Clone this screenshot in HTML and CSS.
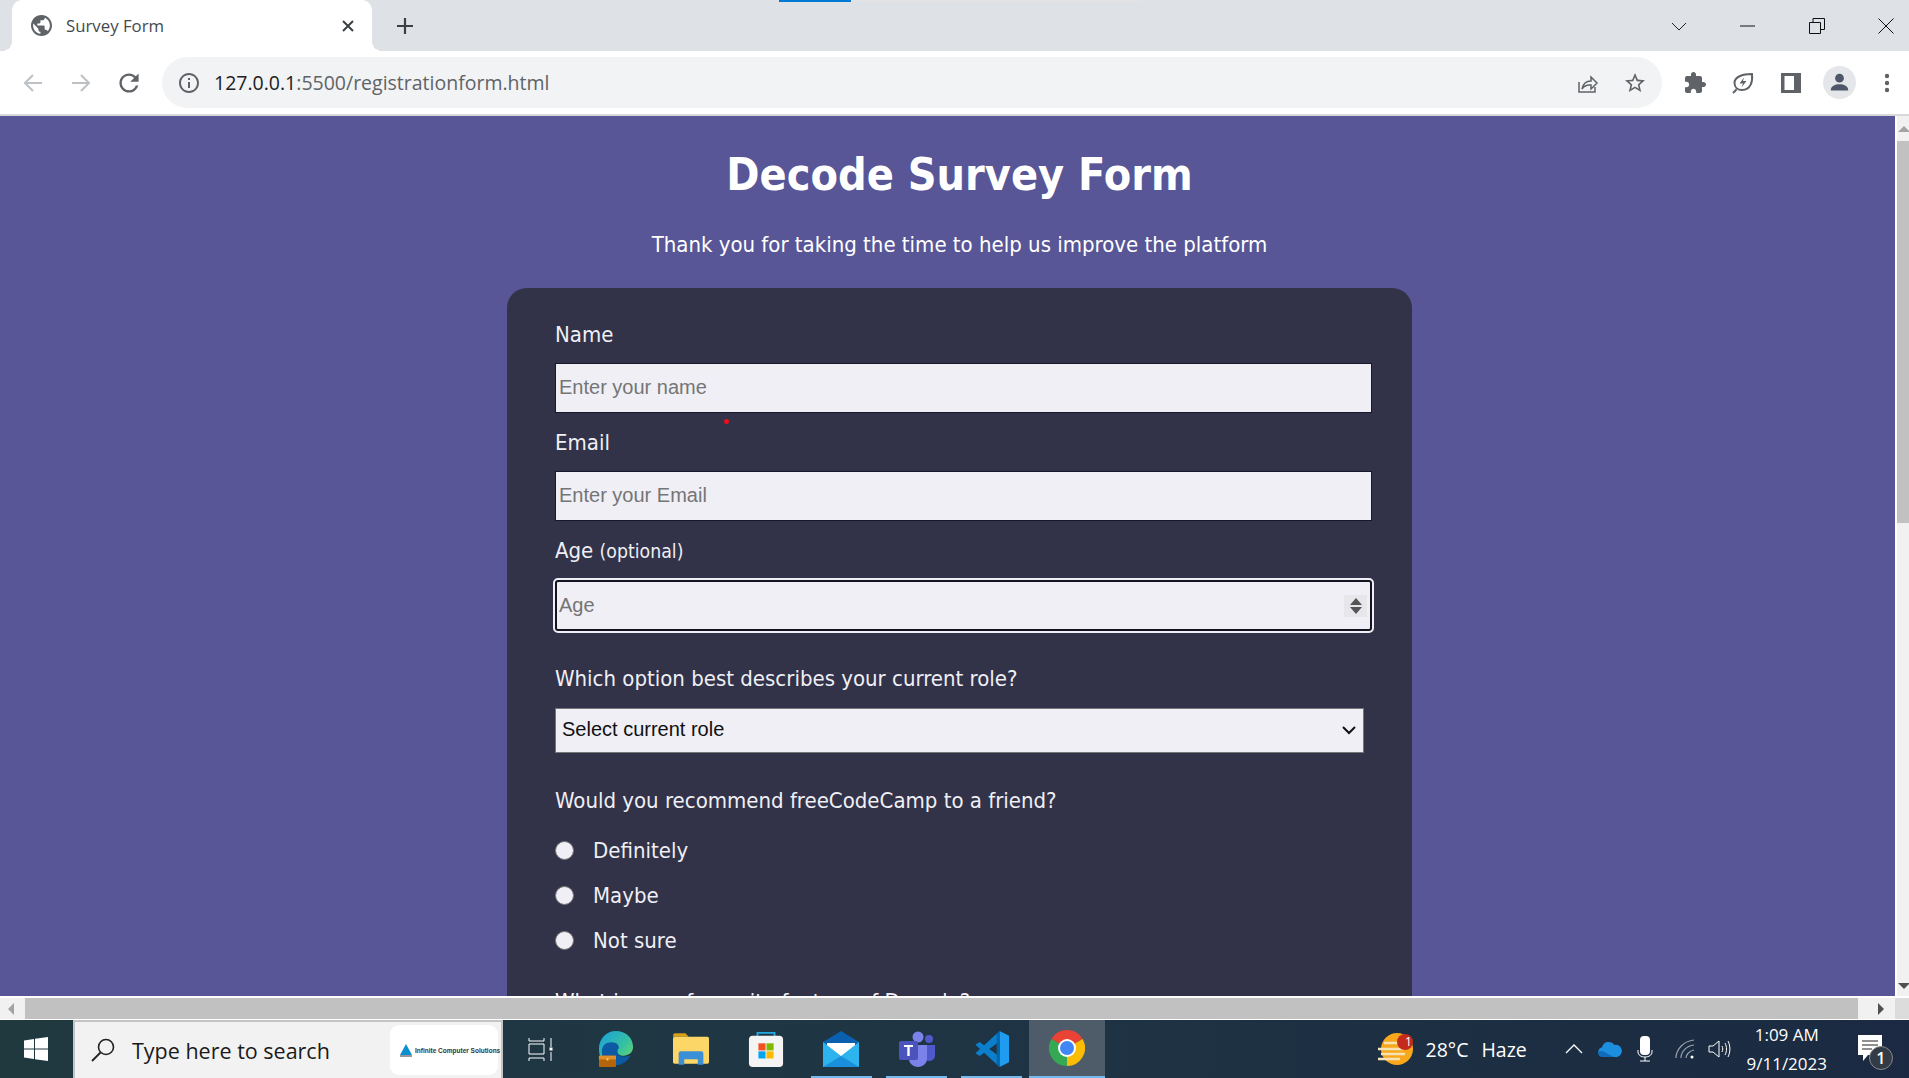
FILE: index.html
```html
<!DOCTYPE html>
<html lang="en">

<head>
    <meta charset="UTF-8">
    <meta name="viewport" content="width=device-width, initial-scale=1.0">
    <title>Survey Form</title>
    <link rel="stylesheet" href="styles.css">
</head>

<body>
    <!-- Browser tabs -->
    <div class="tabstrip">
        <div class="load-bar"><span></span></div>
        <div class="tab">
            <svg class="favicon" viewBox="2 2 20 20"><path fill="#5f6368" d="M12 2C6.48 2 2 6.48 2 12s4.48 10 10 10 10-4.48 10-10S17.52 2 12 2zm-1 17.93c-3.95-.49-7-3.85-7-7.93 0-.62.08-1.21.21-1.79L9 15v1c0 1.1.9 2 2 2v1.93zm6.9-2.54c-.26-.81-1-1.39-1.9-1.39h-1v-3c0-.55-.45-1-1-1H8v-2h2c.55 0 1-.45 1-1V7h2c1.1 0 2-.9 2-2v-.41c2.93 1.19 5 4.06 5 7.41 0 2.08-.8 3.97-2.1 5.39z"/></svg>
            <span class="tab-title">Survey Form</span>
            <svg class="tab-close" viewBox="0 0 12 12"><path d="M1 1l10 10M11 1L1 11" stroke="#3c4043" stroke-width="2" fill="none"/></svg>
        </div>
        <svg class="tab-new" viewBox="0 0 18 18"><path d="M9 1v16M1 9h16" stroke="#3c4043" stroke-width="2.2" fill="none"/></svg>
        <div class="window-btns">
            <svg viewBox="0 0 16 16"><path d="M1 5l7 7 7-7" stroke="#222" fill="none"/></svg>
            <svg viewBox="0 0 16 16"><path d="M0 8h15" stroke="#111" fill="none"/></svg>
            <svg viewBox="0 0 16 16"><path d="M.5 4.5h11v11H.5zM4 4.5V.5h11.5v11h-4" stroke="#111" fill="none"/></svg>
            <svg viewBox="0 0 16 16"><path d="M.5.5l15 15M15.5.5l-15 15" stroke="#111" fill="none"/></svg>
        </div>
    </div>

    <!-- Address bar -->
    <div class="toolbar">
        <svg class="icon" viewBox="0 0 24 24"><path d="M21 12H5M12 4l-8 8 8 8" stroke="#bdc1c6" stroke-width="2" fill="none"/></svg>
        <svg class="icon" viewBox="0 0 24 24"><path d="M3 12h16M12 4l8 8-8 8" stroke="#bdc1c6" stroke-width="2" fill="none"/></svg>
        <svg class="icon" viewBox="2 2 20 20"><path fill="#5f6368" d="M17.65 6.35C16.2 4.9 14.21 4 12 4c-4.42 0-7.99 3.58-7.99 8s3.57 8 7.99 8c3.73 0 6.84-2.55 7.73-6h-2.08c-.82 2.33-3.04 4-5.65 4-3.31 0-6-2.69-6-6s2.69-6 6-6c1.66 0 3.14.69 4.22 1.78L13 11h7V4l-2.35 2.35z"/></svg>
        <div class="omnibox">
            <svg class="icon" viewBox="0 0 24 24"><path fill="#5f6368" d="M11 7h2v2h-2zm0 4h2v6h-2zm1-9C6.48 2 2 6.48 2 12s4.48 10 10 10 10-4.48 10-10S17.52 2 12 2zm0 18c-4.41 0-8-3.59-8-8s3.59-8 8-8 8 3.59 8 8-3.59 8-8 8z"/></svg>
            <div class="url"><b>127.0.0.1</b>:5500/registrationform.html</div>
            <svg class="icon" viewBox="0 0 24 24"><path d="M4 11v10h16v-5M7 18c1-5 4-8 9-8V6l6 6-6 6v-4c-4-.5-7 1-9 4z" stroke="#5f6368" stroke-width="1.5" fill="none"/></svg>
            <svg class="icon" viewBox="0 0 24 24"><path fill="#5f6368" d="M22 9.24l-7.19-.62L12 2 9.19 8.63 2 9.24l5.46 4.73L5.82 21 12 17.27 18.18 21l-1.63-7.03L22 9.24zM12 15.4l-3.76 2.27 1-4.28-3.32-2.88 4.38-.38L12 6.1l1.71 4.04 4.38.38-3.32 2.88 1 4.28L12 15.4z"/></svg>
        </div>
        <svg class="icon" viewBox="0 0 24 24"><path fill="#5f6368" d="M20.5 11H19V7c0-1.1-.9-2-2-2h-4V3.5C13 2.12 11.88 1 10.5 1S8 2.12 8 3.5V5H4c-1.1 0-1.99.9-1.99 2v3.8H3.5c1.49 0 2.7 1.21 2.7 2.7s-1.21 2.7-2.7 2.7H2V20c0 1.1.9 2 2 2h3.8v-1.5c0-1.49 1.21-2.7 2.7-2.7 1.49 0 2.7 1.21 2.7 2.7V22H17c1.1 0 2-.9 2-2v-4h1.5c1.38 0 2.5-1.12 2.5-2.5S21.88 11 20.5 11z"/></svg>
        <svg class="icon" viewBox="0 0 24 24"><path d="M2 22l3.5-3.5M21 3c.8 7-1 16-10 16-4 0-7.5-2.5-7.5-7C3.5 6 11 3 21 3z" stroke="#5f6368" stroke-width="2" fill="none"/><path d="M13 6.5l-4.500 6h3.500l-1.500 4 5-6.500h-3.500z" fill="#5f6368"/></svg>
        <svg class="icon" viewBox="0 0 24 24"><path fill="#5f6368" fill-rule="evenodd" d="M2 2h20v20H2zM5.5 5v14H15V5z"/></svg>
        <div class="avatar">
            <svg viewBox="0 0 24 24"><circle cx="12" cy="7" r="5" fill="#4d5768"/><path d="M2 21c0-5 5-7 10-7s10 2 10 7z" fill="#4d5768"/></svg>
        </div>
        <svg class="icon" viewBox="0 0 24 24"><circle cx="12" cy="5" r="2.2" fill="#5f6368"/><circle cx="12" cy="12" r="2.2" fill="#5f6368"/><circle cx="12" cy="19" r="2.2" fill="#5f6368"/></svg>
    </div>

    <!-- Page content -->
    <div class="viewport">
        <div class="page">
            <div class="page-inner">
                <h1>Decode Survey Form</h1>
                <p class="subtitle">Thank you for taking the time to help us improve the platform</p>
                <form class="survey" action="" method="post">
                    <span class="red-dot"></span>
                    <label for="name">Name</label>
                    <input class="text-input" type="text" id="name" placeholder="Enter your name">
                    <label for="email">Email</label>
                    <input class="text-input" type="text" id="email" placeholder="Enter your Email">
                    <label for="age">Age <small>(optional)</small></label>
                    <div class="age-box">
                        <input type="text" id="age" placeholder="Age">
                        <span class="spinner"><i class="up"></i><i class="down"></i></span>
                    </div>
                    <label class="question" for="role">Which option best describes your current role?</label>
                    <select id="role">
                        <option>Select current role</option>
                    </select>
                    <label class="question q-radio">Would you recommend freeCodeCamp to a friend?</label>
                    <div class="radio-row"><input type="radio" name="rec" id="r1"><label for="r1">Definitely</label></div>
                    <div class="radio-row"><input type="radio" name="rec" id="r2"><label for="r2">Maybe</label></div>
                    <div class="radio-row"><input type="radio" name="rec" id="r3"><label for="r3">Not sure</label></div>
                    <label class="question q-next">What is your favourite feature of Decode?</label>
                </form>
            </div>
        </div>
        <div class="vscroll">
            <span class="arrow-up"></span>
            <div class="vthumb"></div>
            <span class="arrow-down"></span>
        </div>
    </div>
    <div class="hscroll">
        <span class="arrow-left"></span>
        <div class="hthumb"></div>
        <span class="arrow-right"></span>
        <div class="corner"></div>
    </div>

    <!-- Windows taskbar -->
    <div class="taskbar">
        <div class="start">
            <svg viewBox="0 0 24 24"><path fill="#fff" d="M0 3.4l10-1.400v9.500H0zM11 1.800L24 0v11.500H11zM0 12.500h10V22L0 20.600zM11 12.500h13V24l-13-1.800z"/></svg>
        </div>
        <div class="search">
            <svg viewBox="0 0 24 24"><circle cx="15" cy="9" r="7.5" stroke="#222" stroke-width="1.6" fill="none"/><path d="M9.5 14.5L1 23" stroke="#222" stroke-width="1.8" fill="none"/></svg>
            <span class="search-text">Type here to search</span>
            <div class="search-logo">
                <svg viewBox="0 0 14 14"><path d="M7 1l6 11H1z" fill="#0b8fd0"/><path d="M1 13h12" stroke="#333"/></svg>
                <span>Infinite Computer Solutions</span>
            </div>
        </div>
        <div class="app">
            <svg class="taskview" viewBox="0 0 25 25"><path d="M1 1v3h15V1M1 7h15v10H1zM1 24v-3h15v3M23 1v9M23 15v9" stroke="#fff" fill="none"/><rect x="21.5" y="10.5" width="3" height="3" fill="#fff"/></svg>
        </div>
        <div class="app">
            <svg viewBox="0 0 36 38">
                <defs><linearGradient id="edge" x1="0" y1="0" x2="1" y2="1"><stop offset="0" stop-color="#1b9de2"/><stop offset=".55" stop-color="#35c1a0"/><stop offset="1" stop-color="#7fdc5e"/></linearGradient></defs>
                <path d="M18 0c10 0 18 7 18 17 0 6-5 9-10 9-4 0-7-2-7-5 0-1 .5-2 1.5-3-3-3-11-2-13 4-2 5 0 12 6 16C6 38 0 29 0 19 0 8 8 0 18 0z" fill="url(#edge)"/>
                <path d="M3 22c0-7 5-10 10-10 6 0 8 3 8 6-1 1-1.5 2-1.5 3 0 4 3 6 7 6 3 0 6-1 7-2-3 7-9 11-16 11C9 36 3 30 3 22z" fill="#0c59a4"/>
                <rect x="0" y="26" width="18" height="12" rx="1" fill="#b3650c"/><rect x="0" y="26" width="18" height="4" fill="#e0902a"/><rect x="8" y="29" width="2" height="2" fill="#ffd36b"/>
            </svg>
        </div>
        <div class="app">
            <svg viewBox="0 0 32 28"><path d="M0 2a2 2 0 0 1 2-2h9l3 3h-14z" fill="#d99f17"/><rect x="0" y="3" width="32" height="24" rx="1.5" fill="#fcd768"/><path d="M5 28V18a2 2 0 0 1 2-2h18a2 2 0 0 1 2 2v10h-5v-5H10v5z" fill="#3b8fd6"/></svg>
        </div>
        <div class="app">
            <svg viewBox="0 0 36 38"><path d="M9 8V2h18v6" stroke="#24a9e0" stroke-width="2" fill="none"/><rect x="0" y="5" width="36" height="33" rx="4" fill="#f4f4f4"/><rect x="10" y="13" width="7.5" height="7.5" fill="#f25022"/><rect x="18.5" y="13" width="7.5" height="7.5" fill="#7fba00"/><rect x="10" y="21.5" width="7.5" height="7.5" fill="#00a4ef"/><rect x="18.5" y="21.5" width="7.5" height="7.5" fill="#ffb900"/></svg>
        </div>
        <div class="app underlined">
            <svg viewBox="0 0 36 36"><path d="M0 11L18 0l18 11v25H0z" fill="#0a5fae"/><path d="M4 12h28v8l-14 6-14-6z" fill="#fff"/><path d="M0 11l18 14 18-14v25H0z" fill="#2db4ee"/><path d="M0 36l18-11 18 11z" fill="#1a8fdc"/></svg>
        </div>
        <div class="app underlined">
            <svg viewBox="0 0 36 36"><circle cx="19" cy="6" r="5.5" fill="#7b83eb"/><circle cx="30" cy="8" r="4" fill="#5059c9"/><path d="M26 14h10v10c0 4-3 6-6 6-2 0-4-1-4-1z" fill="#5059c9"/><path d="M10 14h18v14c0 4-4 8-9 8s-9-4-9-8z" fill="#7b83eb"/><rect x="0" y="10" width="19" height="19" rx="2" fill="#4b53bc"/><path d="M5 14h9v2h-3.3v9H8.300v-9H5z" fill="#fff"/></svg>
        </div>
        <div class="app underlined">
            <svg viewBox="0 0 36 38"><path d="M26 0l10 5v28l-10 5z" fill="#1f9cf0"/><path d="M26 0v11L11 22l-6 4.500-4.500-3L26 0z" fill="#0b7fcc"/><path d="M26 38V27L11 16l-6-4.500-4.500 3L26 38z" fill="#0b7fcc"/><path d="M26 0v38l-3-2V3z" fill="#0065a9"/></svg>
        </div>
        <div class="app active">
            <svg viewBox="0 0 36 36"><path d="M18 18L2.4 9A18 18 0 0 1 33.6 9z" fill="#ea4335"/><path d="M18 18L33.6 9A18 18 0 0 1 18 36z" fill="#fbbc05"/><path d="M18 18V36A18 18 0 0 1 2.4 9z" fill="#34a853"/><circle cx="18" cy="18" r="9" fill="#fff"/><circle cx="18" cy="18" r="7" fill="#4285f4"/></svg>
        </div>
        <div class="tray">
            <div class="weather">
                <svg viewBox="0 0 36 32"><circle cx="19" cy="16" r="16" fill="#f9a81c"/><path d="M0 16h26M3 21h24M0 26h22M6 10h20" stroke="#f6e3b5" stroke-width="2.5"/><circle cx="27" cy="9" r="8" fill="#c42b1c"/></svg>
                <span class="weather-badge">1</span>
            </div>
            <span class="temp">28°C</span>
            <span class="haze">Haze</span>
            <svg class="tray-up" viewBox="0 0 18 10"><path d="M1 9l8-8 8 8" stroke="#fff" stroke-width="1.3" fill="none"/></svg>
            <svg class="tray-cloud" viewBox="0 0 24 16"><path d="M5 16a5 5 0 0 1-1-9.800A7 7 0 0 1 16.5 4 5.5 5.5 0 0 1 19 16z" fill="#1d8fe0"/><path d="M5 16c-3 0-5-2-5-5 3-2 6-1 10 2l6 3z" fill="#0f6cbd"/></svg>
            <svg class="tray-mic" viewBox="0 0 16 26"><rect x="3" y="0" width="10" height="19" rx="4" fill="#fff"/><path d="M1 14v2c0 3 3 5 7 5s7-2 7-5v-2M8 21v4M3 25h10" stroke="#fff" fill="none"/></svg>
            <svg class="tray-wifi" viewBox="0 0 20 20"><path d="M1 19C1 10 9 2 19 1M6 19c0-6 5-12 13-13M11 19c0-3 3-7 8-8" stroke="#9aa3ad" stroke-width="1.2" fill="none"/><circle cx="17" cy="18" r="1.5" fill="#fff"/></svg>
            <svg class="tray-vol" viewBox="0 0 23 20"><path d="M1 7h4l6-5v16l-6-5H1zM14 7c1 2 1 4 0 6M17 4c2 4 2 8 0 12M20 2c2.5 5 2.5 11 0 16" stroke="#fff" fill="none"/></svg>
            <div class="clock"><span>1:09 AM</span><span>9/11/2023</span></div>
            <div class="notify">
                <svg viewBox="0 0 24 28"><path d="M0 0h24v20H10l-5 6v-6H0z" fill="#fff"/><path d="M4 6h16M4 10h16M4 14h10" stroke="#222"/></svg>
                <span class="notify-badge">1</span>
            </div>
        </div>
    </div>
</body>

</html>
```

FILE: styles.css
```css
/* Reset */
* {
    margin: 0;
    padding: 0;
    box-sizing: border-box;
}

html,
body {
    height: 100%;
    overflow: hidden;
}

body {
    display: flex;
    flex-direction: column;
    font-family: "Open Sans", "Noto Sans", sans-serif;
    background: #fff;
}

svg {
    display: block;
    flex: none;
}

/* Tab strip */
.tabstrip {
    position: relative;
    height: 51px;
    flex: none;
    display: flex;
    align-items: center;
    padding-left: 12px;
    background: #dee1e6;
}

.load-bar {
    position: absolute;
    left: 779px;
    top: 0;
    width: 362px;
    height: 2px;
    background: #e3e3e6;
}

.load-bar span {
    display: block;
    width: 72px;
    height: 2px;
    background: #0078d4;
}

.tab {
    position: relative;
    width: 360px;
    height: 51px;
    display: flex;
    align-items: center;
    padding: 0 18px 0 19px;
    background: #fff;
    border-radius: 10px 10px 0 0;
}

.tab::before,
.tab::after {
    content: "";
    position: absolute;
    bottom: 0;
    width: 10px;
    height: 10px;
}

.tab::before {
    left: -10px;
    background: radial-gradient(circle at 0 0, #dee1e6 10px, #fff 10px);
}

.tab::after {
    right: -10px;
    background: radial-gradient(circle at 100% 0, #dee1e6 10px, #fff 10px);
}

.favicon {
    width: 21px;
    height: 21px;
}

.tab-title {
    flex: 1;
    margin-left: 14px;
    font-family: "Open Sans", sans-serif;
    font-size: 16.8px;
    color: #45494e;
}

.tab-close {
    width: 12px;
    height: 12px;
}

.tab-new {
    width: 18px;
    height: 18px;
    margin-left: 24px;
}

.window-btns {
    margin-left: auto;
    display: flex;
    gap: 53px;
    padding-right: 15px;
}

.window-btns svg {
    width: 16px;
    height: 16px;
}

/* Toolbar */
.toolbar {
    height: 65px;
    flex: none;
    display: flex;
    align-items: center;
    gap: 24px;
    padding: 0 10px 0 21px;
    background: #fff;
    border-bottom: 2px solid #d8d9db;
}

.icon {
    width: 24px;
    height: 24px;
}

.omnibox {
    width: 1500px;
    height: 51px;
    margin: 0 -3px;
    display: flex;
    align-items: center;
    gap: 24px;
    padding: 0 15px;
    background: #f1f3f4;
    border-radius: 26px;
}

.url {
    flex: 1;
    margin-left: -11px;
    font-family: "Open Sans", sans-serif;
    font-size: 19.5px;
    color: #5f6368;
}

.url b {
    font-weight: 400;
    color: #202124;
}

.avatar {
    width: 33px;
    height: 33px;
    margin: 0 -4.5px;
    display: flex;
    align-items: center;
    justify-content: center;
    background: #e4e6ea;
    border-radius: 50%;
}

.avatar svg {
    width: 21px;
    height: 21px;
}

/* Page area */
.viewport {
    flex: 1;
    display: flex;
    min-height: 0;
}

.page {
    flex: 1;
    overflow: hidden;
    background: #585696;
}

.page-inner {
    width: 1919px;
    padding-top: 31px;
    font-family: "DejaVu Sans", sans-serif;
    font-stretch: condensed;
    color: #efeff5;
}

h1 {
    font-size: 44.5px;
    line-height: 56px;
    font-weight: 700;
    text-align: center;
    color: #fff;
}

.subtitle {
    margin-top: 28px;
    font-size: 22px;
    line-height: 28px;
    text-align: center;
    color: #fff;
}

.survey {
    position: relative;
    width: 905px;
    height: 900px;
    margin: 29px auto 0;
    padding: 33px 48px 0;
    background: #323248;
    border-radius: 20px;
}

.red-dot {
    position: absolute;
    left: 217px;
    top: 131px;
    width: 5px;
    height: 5px;
    background: #e8101c;
    border-radius: 50%;
}

.survey label {
    display: block;
    font-size: 22px;
    line-height: 28px;
}

.survey small {
    font-size: 19.3px;
}

.text-input {
    display: block;
    width: 817px;
    height: 50px;
    margin: 14px 0 16px;
    padding: 0 3px 1px;
    font-family: "Liberation Sans", sans-serif;
    font-size: 20px;
    background: #efeff5;
    border: 1px solid #17172e;
}

.age-box {
    width: 817px;
    height: 51px;
    margin-top: 14px;
    display: flex;
    align-items: center;
    padding-right: 3px;
    background: #efeff5;
    border: 2px solid #141420;
    border-radius: 3px;
    outline: 2px solid #efeff5;
    outline-offset: 0;
}

.age-box input {
    flex: 1;
    min-width: 0;
    height: 100%;
    padding: 0 2px 1px;
    font-family: "Liberation Sans", sans-serif;
    font-size: 20px;
    background: transparent;
    border: 0;
    outline: 0;
}

input::placeholder {
    color: #757575;
    opacity: 1;
}

.spinner {
    width: 23px;
    height: 22px;
    display: flex;
    flex-direction: column;
    align-items: center;
    justify-content: center;
    gap: 2px;
    background: #e6e6eb;
}

.spinner i {
    width: 0;
    height: 0;
    border-left: 6px solid transparent;
    border-right: 6px solid transparent;
}

.spinner .up {
    border-bottom: 7px solid #555;
}

.spinner .down {
    border-top: 7px solid #555;
}

.survey .question {
    margin-top: 34px;
}

select {
    display: block;
    width: 809px;
    height: 45px;
    margin-top: 15px;
    padding: 0 0 3px 6px;
    appearance: none;
    font-family: "Liberation Sans", sans-serif;
    font-size: 20px;
    color: #111;
    background: #efeff5 url("data:image/svg+xml,%3Csvg xmlns='http://www.w3.org/2000/svg' viewBox='0 0 14 9'%3E%3Cpath d='M1 1l6 6 6-6' stroke='%23111' stroke-width='2' fill='none'/%3E%3C/svg%3E") no-repeat right 7px center / 14px 9px;
    border: 1px solid #767676;
    border-radius: 0;
}

.survey .q-next {
    margin-top: 25px;
}

.survey .q-radio {
    margin-bottom: 13px;
}

.radio-row {
    height: 45px;
    display: flex;
    align-items: center;
    gap: 19px;
}

.radio-row input {
    appearance: none;
    width: 19px;
    height: 19px;
    background: #efeff5;
    border: 1px solid #777;
    border-radius: 50%;
}

/* Scrollbars */
.vscroll {
    width: 14px;
    flex: none;
    display: flex;
    flex-direction: column;
    align-items: center;
    justify-content: space-between;
    padding: 10px 0 7px 2px;
    background: #f1f1f1;
    border-left: 2px solid #fff;
    position: relative;
}

.vthumb {
    position: absolute;
    left: 0;
    top: 25px;
    width: 12px;
    height: 382px;
    background: #c1c1c1;
}

.arrow-up,
.arrow-down,
.arrow-left,
.arrow-right {
    width: 0;
    height: 0;
    flex: none;
}

.arrow-up {
    border-left: 6px solid transparent;
    border-right: 6px solid transparent;
    border-bottom: 6px solid #a3a3a3;
}

.arrow-down {
    border-left: 6px solid transparent;
    border-right: 6px solid transparent;
    border-top: 6px solid #505050;
}

.hscroll {
    height: 24px;
    flex: none;
    display: flex;
    align-items: center;
    background: #f1f1f1;
    border-top: 2px solid #fff;
    border-bottom: 1px solid #fff;
}

.arrow-left {
    margin-left: 8px;
    border-top: 6px solid transparent;
    border-bottom: 6px solid transparent;
    border-right: 6px solid #a3a3a3;
}

.hthumb {
    width: 1833px;
    height: 100%;
    margin-left: 11px;
    background: #c1c1c1;
}

.arrow-right {
    margin-left: 20px;
    border-top: 6px solid transparent;
    border-bottom: 6px solid transparent;
    border-left: 6px solid #505050;
}

.corner {
    width: 14px;
    height: 100%;
    margin-left: auto;
    background: #dcdcdc;
}

/* Taskbar */
.taskbar {
    height: 58px;
    flex: none;
    display: flex;
    background: linear-gradient(to right, #20393f, #1f3644 40%, #1b2a42);
}

.start {
    width: 73px;
    padding-right: 1px;
    display: flex;
    align-items: center;
    justify-content: center;
}

.start svg {
    width: 24px;
    height: 24px;
}

.search {
    width: 430px;
    display: flex;
    align-items: center;
    padding: 0 3px 0 16px;
    background: #f2f2f2;
    border: 2px solid #c4c4c4;
    border-bottom: 0;
}

.search > svg {
    width: 24px;
    height: 24px;
}

.search-text {
    flex: 1;
    margin-left: 17px;
    font-family: "Open Sans", sans-serif;
    font-size: 21.5px;
    color: #1a1a1a;
}

.search-logo {
    width: 108px;
    height: 50px;
    display: flex;
    align-items: center;
    gap: 2px;
    padding-left: 9px;
    background: #fff;
    border-radius: 9px;
}

.search-logo svg {
    width: 14px;
    height: 14px;
}

.search-logo span {
    font-family: "Liberation Sans", sans-serif;
    font-size: 6.5px;
    font-weight: 700;
    white-space: nowrap;
    color: #333;
}

.app {
    position: relative;
    width: 75.2px;
    display: flex;
    align-items: center;
    justify-content: center;
}

.app svg {
    width: 36px;
    height: 36px;
}

.app .taskview {
    width: 25px;
    height: 25px;
}

.app.underlined::after {
    content: "";
    position: absolute;
    left: 7px;
    right: 7px;
    bottom: 0;
    height: 2px;
    background: #76b9ed;
}

.app.active {
    background: #4d5c68;
    border-bottom: 2px solid #76b9ed;
}

.tray {
    flex: 1;
    display: flex;
    align-items: center;
    color: #fff;
    font-family: "Open Sans", sans-serif;
}

.weather {
    position: relative;
    width: 36px;
    height: 32px;
    margin-left: 273px;
}

.weather svg {
    width: 36px;
    height: 32px;
}

.weather-badge {
    position: absolute;
    left: 24px;
    top: 0;
    width: 14px;
    font-size: 12px;
    line-height: 17px;
    text-align: center;
}

.temp {
    margin-left: 12px;
    font-size: 19.5px;
}

.haze {
    margin-left: 13px;
    font-size: 19.5px;
}

.tray-up {
    width: 18px;
    height: 10px;
    margin-left: 38px;
}

.tray-cloud {
    width: 24px;
    height: 16px;
    margin-left: 15px;
}

.tray-mic {
    width: 16px;
    height: 26px;
    margin-left: 15px;
}

.tray-wifi {
    width: 20px;
    height: 20px;
    margin-left: 22px;
}

.tray-vol {
    width: 23px;
    height: 20px;
    margin-left: 13px;
}

.clock {
    width: 96px;
    margin-left: 8px;
    display: flex;
    flex-direction: column;
    align-items: center;
    gap: 4px;
    font-size: 17px;
    line-height: 25px;
}

.notify {
    position: relative;
    width: 24px;
    height: 28px;
    margin-left: 23px;
}

.notify svg {
    width: 24px;
    height: 28px;
}

.notify-badge {
    position: absolute;
    left: 11px;
    top: 11px;
    width: 24px;
    height: 24px;
    font-size: 16px;
    font-weight: 600;
    line-height: 22px;
    text-align: center;
    background: #333c46;
    border: 1px solid #888;
    border-radius: 50%;
}
```
